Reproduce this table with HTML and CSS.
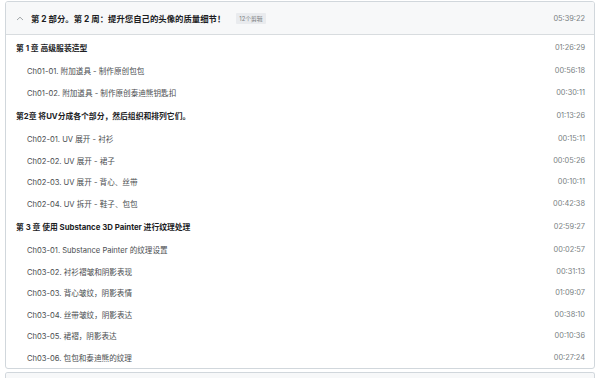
FILE: index.html
```html
<!DOCTYPE html>
<html lang="zh">
<head>
<meta charset="utf-8">
<link rel="stylesheet" href="styles.css">
</head>
<body>
<div class="page">
  <section class="section">
    <div class="sec-head">
      <svg class="chev" width="8" height="5" viewBox="0 0 8 5"><path d="M1 4 L4 1.2 L7 4" fill="none" stroke="#8a8f93" stroke-width="0.8"/></svg>
      <span class="sec-title">第 2 部分。第 2 周：提升您自己的头像的质量细节！</span>
      <span class="badge">12个剪辑</span>
      <span class="sec-time">05:39:22</span>
    </div>
    <div class="sec-body">
      <div class="row chapter"><span>第 1 章 高级服装造型</span><span class="time">01:26:29</span></div>
      <div class="row lesson"><span>Ch01-01. 附加道具 - 制作原创包包</span><span class="time">00:56:18</span></div>
      <div class="row lesson"><span>Ch01-02. 附加道具 - 制作原创泰迪熊钥匙扣</span><span class="time">00:30:11</span></div>
      <div class="row chapter"><span>第2章 将UV分成各个部分，然后组织和排列它们。</span><span class="time">01:13:26</span></div>
      <div class="row lesson"><span>Ch02-01. UV 展开 - 衬衫</span><span class="time">00:15:11</span></div>
      <div class="row lesson"><span>Ch02-02. UV 展开 - 裙子</span><span class="time">00:05:26</span></div>
      <div class="row lesson"><span>Ch02-03. UV 展开 - 背心、丝带</span><span class="time">00:10:11</span></div>
      <div class="row lesson"><span>Ch02-04. UV 拆开 - 鞋子、包包</span><span class="time">00:42:38</span></div>
      <div class="row chapter"><span>第 3 章 使用 Substance 3D Painter 进行纹理处理</span><span class="time">02:59:27</span></div>
      <div class="row lesson"><span>Ch03-01. Substance Painter 的纹理设置</span><span class="time">00:02:57</span></div>
      <div class="row lesson"><span>Ch03-02. 衬衫褶皱和阴影表现</span><span class="time">00:31:13</span></div>
      <div class="row lesson"><span>Ch03-03. 背心皱纹，阴影表情</span><span class="time">01:09:07</span></div>
      <div class="row lesson"><span>Ch03-04. 丝带皱纹，阴影表达</span><span class="time">00:38:10</span></div>
      <div class="row lesson"><span>Ch03-05. 裙褶，阴影表达</span><span class="time">00:10:36</span></div>
      <div class="row lesson"><span>Ch03-06. 包包和泰迪熊的纹理</span><span class="time">00:27:24</span></div>
    </div>
  </section>
  <section class="section next">
    <div class="sec-head"></div>
  </section>
</div>
</body>
</html>
```
FILE: styles.css
```css
* { box-sizing: border-box; }
html, body { margin: 0; padding: 0; background: #fff; overflow: hidden; }
body {
  font-family: "Inter", "Noto Sans CJK SC", sans-serif;
  color: #1c1d1f;
  width: 600px;
  height: 378px;
}
.page {
  height: 378px;
  overflow: hidden;
  padding: 1px 5px 0 5px;
  display: flex;
  flex-direction: column;
  gap: 3px;
}
.section {
  flex: none;
  border: 1px solid #d1d7dc;
  border-radius: 3px;
  overflow: hidden;
}
.sec-head {
  height: 33px;
  background: #f7f8f9;
  border-bottom: 1px solid #d8dcdf;
  display: flex;
  align-items: center;
  padding: 0 9px 0 10px;
}
.chev { margin-right: 7px; flex: none; }
.sec-title {
  font-size: 8.4px;
  font-weight: 700;
}
.badge {
  margin-left: 11px;
  background: #e9ebee;
  color: #7a7f83;
  font-size: 5.8px;
  padding: 1px 3px;
  border-radius: 1px;
}
.sec-time {
  margin-left: auto;
  font-size: 7.4px;
  color: #7a7f83;
}
.sec-body {
  padding: 0 9px 0 10px;
}
.row {
  display: flex;
  align-items: center;
  justify-content: space-between;
}
.chapter {
  height: 25px;
  font-size: 7.8px;
  font-weight: 700;
}
.lesson {
  height: 21.5px;
  font-size: 7.6px;
  color: #4a4d50;
  padding-left: 11px;
}
.time {
  font-size: 7.4px;
  font-weight: 400;
  color: #7a7f83;
}
.next { border-bottom: none; border-radius: 3px 3px 0 0; }
.next .sec-head { border-bottom: none; }
```
